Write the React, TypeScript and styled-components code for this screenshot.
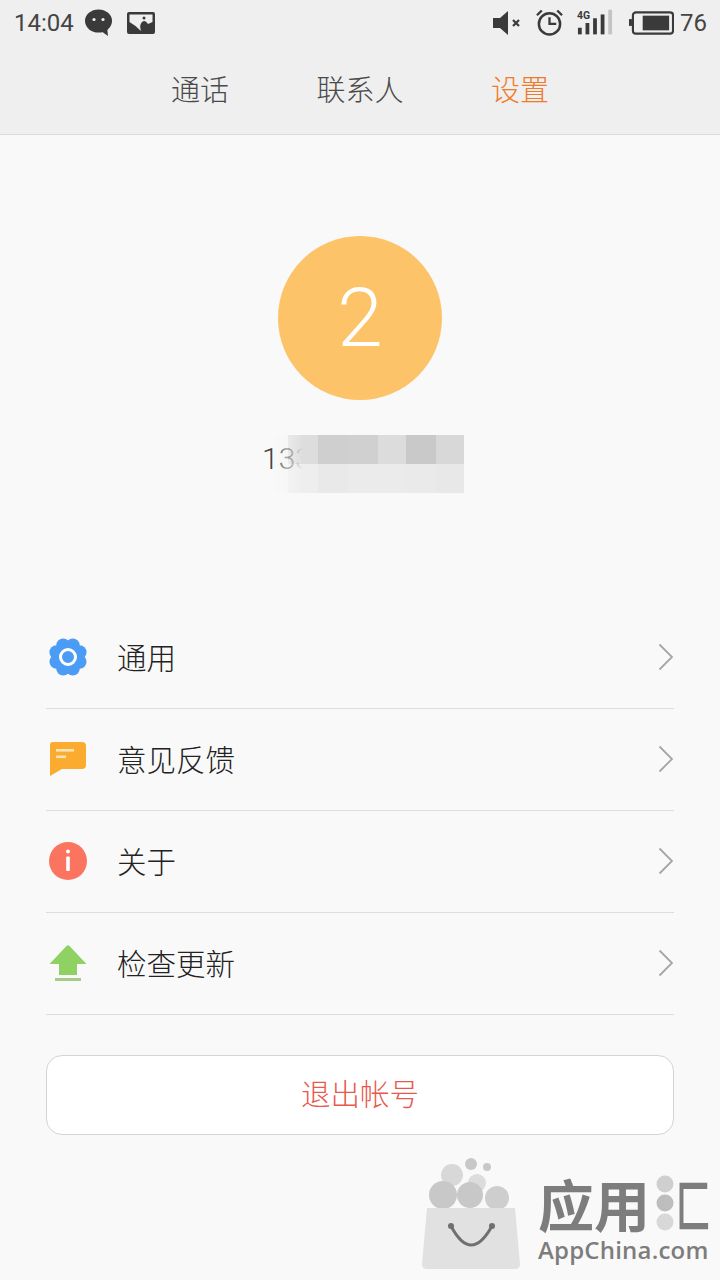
import React from 'react';
import styled, { createGlobalStyle } from 'styled-components';

const GlobalStyle = createGlobalStyle`
  html, body {
    margin: 0;
    padding: 0;
    background: #f9f9f9;
  }
  * {
    box-sizing: border-box;
  }
`;

const CJK = `"Noto Sans CJK SC", "Noto Sans", sans-serif`;

const Page = styled.div`
  position: relative;
  width: 720px;
  height: 1280px;
  overflow: hidden;
  background: #f9f9f9;
  font-family: "Roboto", ${CJK};
`;

const Top = styled.header`
  height: 135px;
  background: #efefef;
  border-bottom: 1px solid #dcdcdc;
`;

const StatusBar = styled.div`
  height: 46px;
  padding: 0 13px 0 14px;
  display: flex;
  align-items: center;
  justify-content: space-between;
  color: #3a3a3a;
`;

const StatusGroup = styled.div`
  display: flex;
  align-items: center;
`;

const StatusText = styled.span`
  font-size: 24px;
  line-height: 46px;
  color: #444;
  font-weight: 400;
`;

const Tabs = styled.nav`
  display: flex;
  justify-content: center;
  padding-top: 21px;
`;

const Tab = styled.div<{ $active?: boolean }>`
  width: 160px;
  text-align: center;
  font-family: ${CJK};
  font-size: 29px;
  font-weight: 300;
  line-height: 42px;
  color: ${(p) => (p.$active ? '#ef7a2c' : '#4a4a4a')};
`;

const Profile = styled.section`
  display: flex;
  flex-direction: column;
  align-items: center;
  padding-top: 101px;
  height: 472px;
`;

const Avatar = styled.div`
  width: 164px;
  height: 164px;
  border-radius: 50%;
  background: #fdc368;
  color: #fff;
  display: flex;
  align-items: center;
  justify-content: center;
  font-family: "Roboto", sans-serif;
  font-weight: 300;
  font-size: 82px;
`;

const Phone = styled.div`
  position: relative;
  width: 204px;
  height: 58px;
  margin: 35px 0 0 4px;
  padding-left: 2px;
  font-family: "Roboto", sans-serif;
  font-size: 30px;
  font-weight: 300;
  line-height: 48px;
  color: #444;
  overflow: hidden;
`;

const Mosaic = styled.div`
  position: absolute;
  inset: 0;
  display: grid;
  grid-template-columns: 28px 30px 30px 30px 28px 30px 28px;
  grid-template-rows: 29px 29px;
  filter: blur(0.6px);
`;

const MosaicCell = styled.div<{ $tone: string; $fade?: boolean }>`
  background: ${(p) => p.$tone};
  ${(p) => (p.$fade ? 'mask-image: linear-gradient(to right, rgba(0, 0, 0, 0.55), #000 50%);' : '')}
`;

const Menu = styled.ul`
  list-style: none;
  margin: 0 46px;
  padding: 0;
`;

const Row = styled.li`
  height: 102px;
  padding-bottom: 2px;
  display: flex;
  align-items: center;
  border-bottom: 1px solid #dddddd;
`;

const RowIcon = styled.div`
  width: 44px;
  height: 44px;
  margin-right: 27px;
  display: flex;
  align-items: center;
  justify-content: center;
`;

const RowLabel = styled.span`
  flex: 1;
  margin-bottom: 2px;
  font-family: ${CJK};
  font-size: 29.5px;
  font-weight: 300;
  line-height: 40px;
  color: #222;
`;

const Logout = styled.button`
  display: block;
  width: 628px;
  height: 80px;
  margin: 40px 46px 0;
  padding: 0 0 6px;
  background: #fff;
  border: 1px solid #d4d4d4;
  border-radius: 16px;
  font-family: ${CJK};
  font-size: 29.5px;
  font-weight: 300;
  color: #e8584c;
`;

const Watermark = styled.div`
  position: absolute;
  left: 420px;
  top: 1158px;
  width: 300px;
  height: 122px;
  display: flex;
`;

const BagSvg = styled.svg`
  flex: none;
`;

const LogoText = styled.div`
  flex: none;
  width: 182px;
  margin-left: 14px;
  display: flex;
  flex-direction: column;
  white-space: nowrap;
`;

const LogoName = styled.div`
  display: flex;
  align-items: center;
  height: 62px;
  margin-top: 14px;
  font-family: ${CJK};
  font-weight: 700;
  font-size: 56px;
  line-height: 62px;
  color: #7d7d7d;
`;

const LogoBracket = styled.span`
  display: inline-block;
  width: 34px;
  transform: scaleX(0.62);
  transform-origin: left center;
`;

const LogoDomain = styled.div`
  font-family: "Open Sans", sans-serif;
  font-weight: 600;
  font-size: 24px;
  line-height: 26px;
  letter-spacing: 0.2px;
  color: #7d7d7d;
  margin-top: 3px;
`;

const Chevron = () => (
  <svg width="16" height="28" viewBox="0 0 16 28" fill="none">
    <path d="M1.5 1.5 L14 14 L1.5 26.5" stroke="#a6a6a6" strokeWidth="1.8" />
  </svg>
);

const edgeFade = 'linear-gradient(to right, transparent 45%, rgba(245, 245, 245, 0.6))';
const mosaicTones = [
  edgeFade, '#dddddd', '#cfcfcf', '#d0d0d0', '#dcdcdc', '#c9c9c9', '#d8d8d8',
  edgeFade, '#eeeeee', '#e9e9e9', '#ebebeb', '#ebebeb', '#eaeaea', '#e8e8e8',
];

const Gear = () => (
  <svg width="40" height="40" viewBox="0 0 40 40">
    {[22.5, 67.5, 112.5, 157.5, 202.5, 247.5, 292.5, 337.5].map((a) => (
      <circle
        key={a}
        cx={20 + 12.5 * Math.cos((a * Math.PI) / 180)}
        cy={20 + 12.5 * Math.sin((a * Math.PI) / 180)}
        r="7"
        fill="#4a9cf5"
      />
    ))}
    <circle cx="20" cy="20" r="14" fill="#4a9cf5" />
    <circle cx="20" cy="20" r="7.5" fill="none" stroke="#fff" strokeWidth="3" />
  </svg>
);

const Feedback = () => (
  <svg width="38" height="36" viewBox="0 0 38 36">
    <path d="M4 1 H33 Q37 1 37 5 V24 Q37 28 33 28 H13 L1 35 V4 Q1 1 4 1 Z" fill="#fbab2f" />
    <rect x="7" y="8" width="18" height="2.6" fill="#fde3b5" />
    <rect x="7" y="14.5" width="10" height="2.6" fill="#fde3b5" />
  </svg>
);

const Info = () => (
  <svg width="38" height="38" viewBox="0 0 38 38">
    <circle cx="19" cy="19" r="19" fill="#fb7460" />
    <circle cx="19" cy="9.5" r="2" fill="#fff" />
    <rect x="17.2" y="14.5" width="3.6" height="14.5" rx="1" fill="#fff" />
  </svg>
);

const Update = () => (
  <svg width="38" height="36" viewBox="0 0 38 36">
    <path d="M17.5 1 Q19 -0.5 20.5 1 L37.5 19 H28 V30 H10 V19 H0.5 Z" fill="#8fd163" />
    <rect x="6" y="33" width="26" height="3" fill="#a6cc88" />
  </svg>
);

const items = [
  { label: '通用', icon: <Gear /> },
  { label: '意见反馈', icon: <Feedback /> },
  { label: '关于', icon: <Info /> },
  { label: '检查更新', icon: <Update /> },
];

const WeChat = () => (
  <svg width="30" height="28" viewBox="0 0 30 28" style={{ marginLeft: 10 }}>
    <ellipse cx="14.5" cy="12" rx="13.5" ry="11.5" fill="#3a3a3a" />
    <path d="M17 22 L24 27 L23 18 Z" fill="#3a3a3a" />
    <circle cx="10" cy="10.5" r="1.6" fill="#efefef" />
    <circle cx="19" cy="10.5" r="1.6" fill="#efefef" />
  </svg>
);

const PictureIcon = () => (
  <svg width="28" height="24" viewBox="0 0 28 24" style={{ marginLeft: 13 }}>
    <rect width="28" height="22" y="1" rx="2" fill="#3a3a3a" />
    <path d="M2.5 3.5 H25.5 V11 L21 13 Q18 8 15 11 Q12 14 14 20 Q8 14 2.5 11 Z" fill="#efefef" />
    <circle cx="17" cy="7" r="1.5" fill="#3a3a3a" />
  </svg>
);

const Muted = () => (
  <svg width="28" height="24" viewBox="0 0 28 24">
    <path d="M0 7 H7 L15 0 V24 L7 17 H0 Z" fill="#3a3a3a" />
    <path d="M20 9 L26 15 M26 9 L20 15" stroke="#3a3a3a" strokeWidth="2.2" />
  </svg>
);

const Alarm = () => (
  <svg width="27" height="28" viewBox="0 0 28 28" style={{ marginLeft: 15 }}>
    <circle cx="14" cy="15" r="11" fill="none" stroke="#3a3a3a" strokeWidth="2.6" />
    <path d="M14 8 V15 H21" fill="none" stroke="#3a3a3a" strokeWidth="2.4" />
    <path d="M1 6 L6 1 M27 6 L22 1" stroke="#3a3a3a" strokeWidth="2.4" />
  </svg>
);

const Signal = () => (
  <svg width="36" height="28" viewBox="0 0 38 28" style={{ marginLeft: 14 }}>
    <text x="0" y="10" fontSize="11" fontWeight="700" fontFamily="Roboto, sans-serif" fill="#3a3a3a">4G</text>
    <rect x="1" y="19" width="4" height="7" fill="#3a3a3a" />
    <rect x="9" y="14" width="4" height="12" fill="#3a3a3a" />
    <rect x="17" y="9" width="4" height="17" fill="#3a3a3a" />
    <rect x="25" y="5" width="4" height="21" fill="#3a3a3a" />
    <rect x="33" y="0" width="4" height="26" fill="#c4c4c4" />
  </svg>
);

const Battery = () => (
  <svg width="45" height="24" viewBox="0 0 46 24" style={{ marginLeft: 16 }}>
    <rect x="0" y="8" width="3" height="7" fill="#3a3a3a" />
    <rect x="4" y="1.2" width="41" height="21.6" rx="3" fill="none" stroke="#3a3a3a" strokeWidth="2.2" />
    <rect x="14" y="4.5" width="27" height="15" fill="#3a3a3a" />
  </svg>
);

const Bag = () => (
  <BagSvg width="104" height="122" viewBox="0 0 104 122">
    <circle cx="51" cy="6" r="6" fill="#c8c8c8" />
    <circle cx="67" cy="9" r="4" fill="#c8c8c8" />
    <circle cx="32" cy="17" r="11" fill="#d8d8d8" />
    <circle cx="57" cy="25" r="9" fill="#dcdcdc" />
    <circle cx="23" cy="37" r="14" fill="#c8c8c8" />
    <circle cx="50" cy="37" r="13" fill="#c8c8c8" />
    <circle cx="77" cy="40" r="12" fill="#cecece" />
    <path d="M7 50 H95 L100 106 Q100 111 95 111 H7 Q2 111 2 106 Z" fill="#e1e1e1" />
    <path d="M31 68 Q51 106 72 68" fill="none" stroke="#6f6f6f" strokeWidth="3" />
    <circle cx="31" cy="68" r="3" fill="#6f6f6f" />
    <circle cx="72" cy="68" r="3" fill="#6f6f6f" />
  </BagSvg>
);

const LogoDots = () => (
  <svg width="20" height="56" viewBox="0 0 20 56" style={{ margin: '0 1px 0 5px', flex: 'none' }}>
    <circle cx="10" cy="9" r="8.5" fill="#cfcfcf" />
    <circle cx="10" cy="28" r="8.5" fill="#bdbdbd" />
    <circle cx="10" cy="47" r="8.5" fill="#d8d8d8" />
  </svg>
);

export default function App() {
  return (
    <Page>
      <GlobalStyle />
      <Top>
        <StatusBar>
          <StatusGroup>
            <StatusText>14:04</StatusText>
            <WeChat />
            <PictureIcon />
          </StatusGroup>
          <StatusGroup>
            <Muted />
            <Alarm />
            <Signal />
            <Battery />
            <StatusText>&nbsp;76</StatusText>
          </StatusGroup>
        </StatusBar>
        <Tabs>
          <Tab>通话</Tab>
          <Tab>联系人</Tab>
          <Tab $active>设置</Tab>
        </Tabs>
      </Top>

      <Profile>
        <Avatar>2</Avatar>
        <Phone>
          133
          <Mosaic>
            {mosaicTones.map((tone, i) => (
              <MosaicCell key={i} $tone={tone} $fade={i % 7 === 1} />
            ))}
          </Mosaic>
        </Phone>
      </Profile>

      <Menu>
        {items.map((item) => (
          <Row key={item.label}>
            <RowIcon>{item.icon}</RowIcon>
            <RowLabel>{item.label}</RowLabel>
            <Chevron />
          </Row>
        ))}
      </Menu>

      <Logout>退出帐号</Logout>

      <Watermark>
        <Bag />
        <LogoText>
          <LogoName>
            应用
            <LogoDots />
            <LogoBracket>匚</LogoBracket>
          </LogoName>
          <LogoDomain>AppChina.com</LogoDomain>
        </LogoText>
      </Watermark>
    </Page>
  );
}
